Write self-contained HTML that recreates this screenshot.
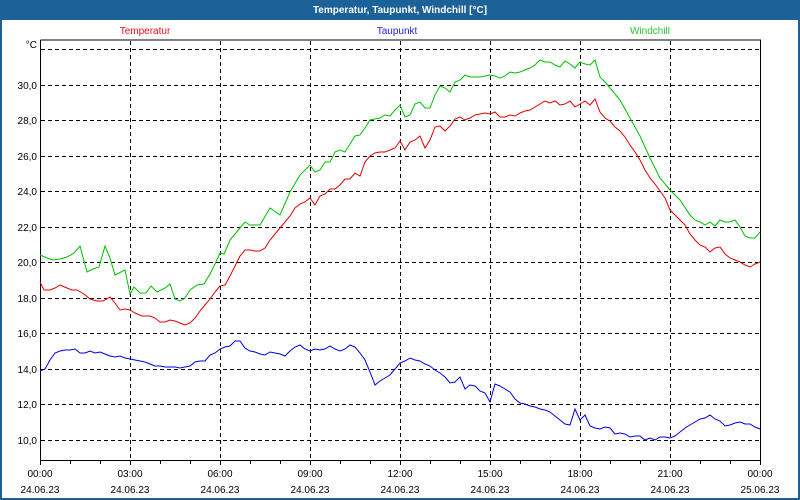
<!DOCTYPE html>
<html><head><meta charset="utf-8"><style>
html,body{margin:0;padding:0;width:800px;height:500px;overflow:hidden;background:#fff}
svg{display:block}
text{font-family:"Liberation Sans",sans-serif;font-size:10px}
</style></head><body>
<svg width="800" height="500" viewBox="0 0 800 500">
<rect x="0" y="0" width="800" height="500" fill="#1c6198"/>
<rect x="2" y="20" width="796" height="478" fill="#fff"/>
<text x="400" y="13" text-anchor="middle" fill="#fff" font-weight="bold" font-size="11">Temperatur, Taupunkt, Windchill [°C]</text>
<text x="145" y="34" text-anchor="middle" fill="#f01010">Temperatur</text>
<text x="397" y="34" text-anchor="middle" fill="#2020e0">Taupunkt</text>
<text x="650" y="34" text-anchor="middle" fill="#30c030">Windchill</text>
<g stroke="#000" stroke-width="1" stroke-dasharray="4,3" fill="none">
<path d="M41 49.5H760M41 85.5H760M41 120.5H760M41 156.5H760M41 191.5H760M41 227.5H760M41 262.5H760M41 298.5H760M41 333.5H760M41 369.5H760M41 404.5H760M41 440.5H760"/>
<path d="M130.5 41V460M220.5 41V460M310.5 41V460M400.5 41V460M490.5 41V460M580.5 41V460M670.5 41V460"/>
</g>
<path d="M40.5 40V460.5H760.5V40H40.5" stroke="#000" fill="none"/>
<g stroke="#000"><path d="M40.5 461v4M70.5 461v3M100.5 461v3M130.5 461v4M160.5 461v3M190.5 461v3M220.5 461v4M250.5 461v3M280.5 461v3M310.5 461v4M340.5 461v3M370.5 461v3M400.5 461v4M430.5 461v3M460.5 461v3M490.5 461v4M520.5 461v3M550.5 461v3M580.5 461v4M610.5 461v3M640.5 461v3M670.5 461v4M700.5 461v3M730.5 461v3M760.5 461v4"/></g>
<g fill="#000" text-anchor="end">
<text x="37" y="48">°C</text>
<text x="37" y="89">30,0</text><text x="37" y="124">28,0</text><text x="37" y="160">26,0</text><text x="37" y="195">24,0</text><text x="37" y="231">22,0</text><text x="37" y="266">20,0</text><text x="37" y="302">18,0</text><text x="37" y="337">16,0</text><text x="37" y="373">14,0</text><text x="37" y="408">12,0</text><text x="37" y="444">10,0</text>
</g>
<g fill="#000" text-anchor="middle">
<text x="40" y="477">00:00</text><text x="130" y="477">03:00</text><text x="220" y="477">06:00</text><text x="310" y="477">09:00</text><text x="400" y="477">12:00</text><text x="490" y="477">15:00</text><text x="580" y="477">18:00</text><text x="670" y="477">21:00</text><text x="760" y="477">00:00</text>
<text x="40" y="493">24.06.23</text><text x="130" y="493">24.06.23</text><text x="220" y="493">24.06.23</text><text x="310" y="493">24.06.23</text><text x="400" y="493">24.06.23</text><text x="490" y="493">24.06.23</text><text x="580" y="493">24.06.23</text><text x="670" y="493">24.06.23</text><text x="760" y="493">25.06.23</text>
</g>
<polyline fill="none" stroke="#00c000" points="40,255 47,258 53,260 60,259 67,257 74,253 80,246 87,272 93,269 99,267 105,246 110,258 115,275 125,270 130,294 134,287 140,293 146,293 151,286 157,292 165,288 170,284 175,299 180,301 185,298 190,290 197,285 204,284 210,274 215,264 220,253 224,254 230,240 240,228 245,222 250,225 260,225 270,208 280,215 290,192 300,175 310,165 315,172 320,170 325,162 330,162 335,152 340,150 345,152 350,144 355,136 360,135 365,128 370,120 380,118 385,115 390,116 395,110 400,105 405,117 410,115 415,104 420,102 425,108 430,108 435,95 440,86 445,88 450,92 455,82 460,80 465,75 470,77 480,77 485,76 490,75 495,76 500,78 505,76 510,72 515,73 520,72 525,70 530,68 535,65 540,60 545,62 550,62 555,65 560,67 565,61 570,64 575,68 580,62 585,64 590,65 595,60 600,77 605,82 610,88 620,100 630,118 640,136 650,158 660,178 670,190 680,200 690,215 695,220 700,222 705,225 710,222 715,226 720,220 725,222 730,222 735,220 740,227 745,236 750,238 755,238 760,232"/>
<polyline fill="none" stroke="#e00000" points="40,282 44,290 50,290 55,288 60,285 67,288 72,290 77,290 84,294 90,299 97,301 103,301 110,297 115,303 120,310 125,309 130,310 135,313 142,316 150,316 155,318 160,322 165,322 170,320 175,321 180,323 185,325 190,323 195,318 200,311 205,305 210,299 215,292 220,286 225,285 230,276 235,266 240,256 245,250 250,250 255,251 260,251 265,248 270,240 275,234 280,228 285,222 290,216 295,208 300,204 305,202 310,198 315,205 320,196 325,194 330,189 335,189 340,185 345,179 350,179 355,173 360,176 365,162 370,156 375,153 380,152 385,152 390,150 395,148 400,141 405,150 410,142 415,140 420,136 425,148 430,140 435,127 440,126 445,131 450,126 455,119 460,117 465,120 470,118 475,115 480,114 485,113 490,114 495,112 500,117 505,117 510,115 515,116 520,113 525,111 530,110 535,107 540,104 545,101 550,103 555,101 560,105 565,104 570,101 575,107 580,104 585,101 590,105 595,99 600,112 605,118 610,121 615,127 620,131 625,137 630,145 635,152 640,160 645,170 650,178 655,184 660,191 665,198 670,210 675,215 680,220 685,225 690,234 695,240 700,245 705,247 710,252 715,248 720,247 725,254 730,258 735,260 740,262 745,265 750,267 755,264 760,262"/>
<polyline fill="none" stroke="#0000e0" points="40,371 45,369 50,360 55,353 60,351 65,350 70,350 75,349 80,353 85,353 90,351 95,353 100,352 105,354 110,356 115,357 120,356 125,358 130,359 135,360 140,361 145,362 150,364 155,366 160,366 165,367 170,367 175,367 180,368 185,367 190,366 195,362 200,361 205,361 210,355 215,353 220,349 225,347 230,346 235,341 240,341 245,348 250,351 255,352 260,354 265,355 270,352 275,353 280,354 285,356 290,351 295,347 300,345 305,349 310,351 315,349 320,350 325,349 330,346 335,349 340,351 345,349 350,345 355,347 360,353 365,360 370,372 375,385 380,381 385,378 390,375 395,369 400,363 405,361 410,358 415,360 420,361 425,364 430,366 435,370 440,373 445,377 450,383 455,382 460,377 465,389 470,385 475,386 480,391 485,393 490,402 495,384 500,386 505,389 510,392 515,399 520,403 525,404 530,406 535,407 540,409 545,410 550,412 555,416 560,420 565,424 570,425 575,409 580,420 585,415 590,426 595,428 600,429 605,427 610,428 615,434 620,433 625,434 630,437 635,436 640,436 645,440 650,438 655,440 660,437 665,437 670,438 675,436 680,432 685,428 690,425 695,422 700,419 705,418 710,415 715,419 720,421 725,426 730,425 735,423 740,422 745,424 750,424 755,427 760,429"/>
</svg>
</body></html>
